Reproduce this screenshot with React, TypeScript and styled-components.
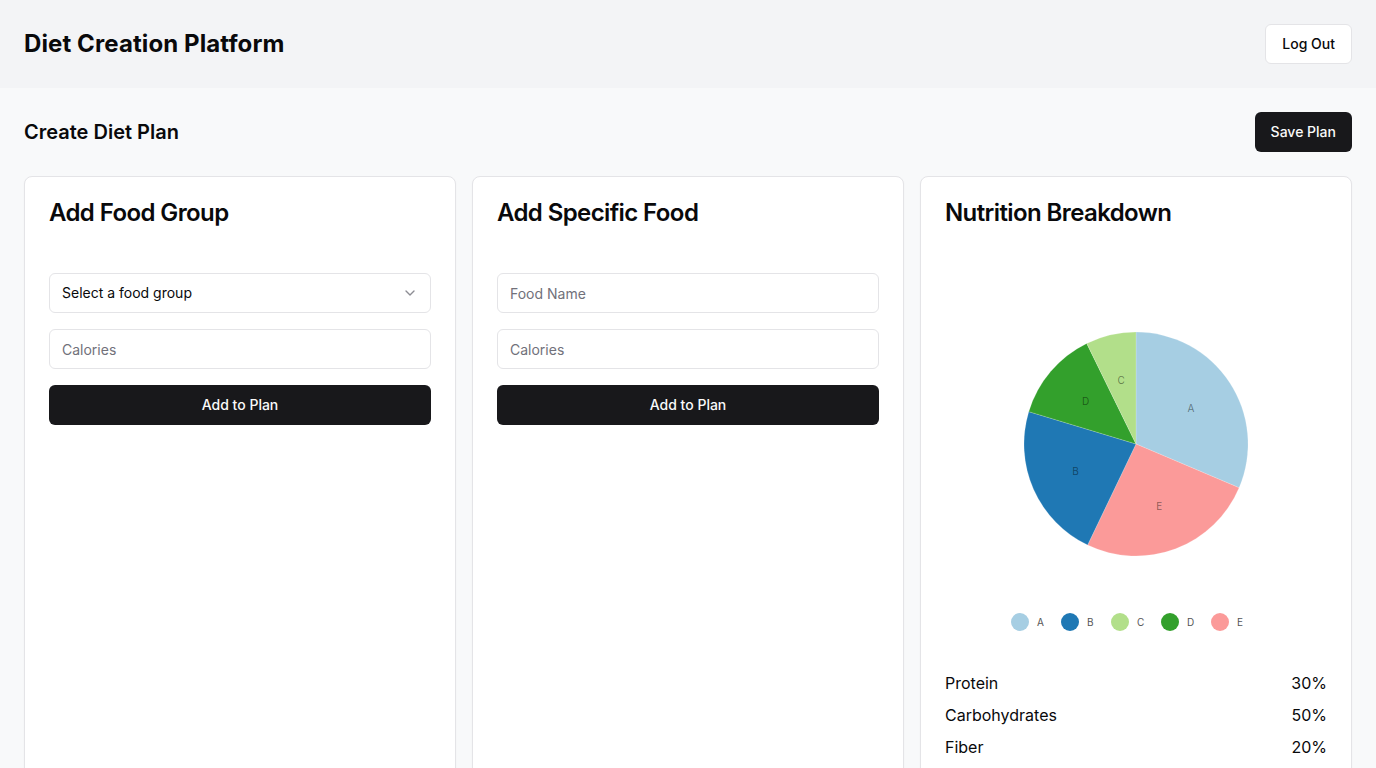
import styled, { createGlobalStyle } from "styled-components";

const GlobalStyle = createGlobalStyle`
  * {
    box-sizing: border-box;
  }
  body {
    margin: 0;
    font-family: Inter, "Noto Sans", sans-serif;
    color: #09090b;
    background: #f8f9fa;
  }
`;

interface Slice {
  label: string;
  color: string;
  start: number;
  end: number;
}

// angles measured clockwise from 12 o'clock, in degrees
const slices: Slice[] = [
  { label: "A", color: "#a6cee3", start: 0, end: 113 },
  { label: "E", color: "#fb9a99", start: 113, end: 205.6 },
  { label: "B", color: "#1f78b4", start: 205.6, end: 286.8 },
  { label: "D", color: "#33a02c", start: 286.8, end: 333.9 },
  { label: "C", color: "#b2df8a", start: 333.9, end: 360 },
];

const legend = [
  { label: "A", color: "#a6cee3" },
  { label: "B", color: "#1f78b4" },
  { label: "C", color: "#b2df8a" },
  { label: "D", color: "#33a02c" },
  { label: "E", color: "#fb9a99" },
];

const nutrients = [
  { name: "Protein", value: "30%" },
  { name: "Carbohydrates", value: "50%" },
  { name: "Fiber", value: "20%" },
];

const CX = 191;
const CY = 171;
const R = 112;

const point = (deg: number, r: number) => {
  const rad = (deg * Math.PI) / 180;
  return [CX + Math.sin(rad) * r, CY - Math.cos(rad) * r];
};

const arcPath = (s: Slice) => {
  const [x1, y1] = point(s.start, R);
  const [x2, y2] = point(s.end, R);
  const large = s.end - s.start > 180 ? 1 : 0;
  return `M ${CX} ${CY} L ${x1} ${y1} A ${R} ${R} 0 ${large} 1 ${x2} ${y2} Z`;
};

const PieChart = () => (
  <ChartSvg width={382} height={376} viewBox="0 0 382 376">
    {slices.map((s) => (
      <path key={s.label} d={arcPath(s)} fill={s.color} stroke="#fff" strokeWidth={0.3} strokeOpacity={0.6} />
    ))}
    {slices.map((s) => {
      const [x, y] = point((s.start + s.end) / 2, 66);
      return (
        <text
          key={s.label}
          x={x}
          y={y}
          textAnchor="middle"
          dominantBaseline="central"
          fontSize={10}
          fill="#000"
          fillOpacity={0.45}
        >
          {s.label}
        </text>
      );
    })}
    {legend.map((l, i) => (
      <g key={l.label}>
        <circle cx={75 + i * 50} cy={349} r={9} fill={l.color} />
        <text x={92 + i * 50} y={349} dominantBaseline="central" fontSize={10} fill="#555">
          {l.label}
        </text>
      </g>
    ))}
  </ChartSvg>
);

const App = () => {
  return (
    <>
      <GlobalStyle />
      <Header>
        <AppTitle>Diet Creation Platform</AppTitle>
        <OutlineButton>Log Out</OutlineButton>
      </Header>
      <Main>
        <TopRow>
          <PageTitle>Create Diet Plan</PageTitle>
          <DarkButton>Save Plan</DarkButton>
        </TopRow>
        <Grid>
          <Card>
            <CardHeader>
              <CardTitle>Add Food Group</CardTitle>
            </CardHeader>
            <CardContent>
              <SelectBox>
                <span>Select a food group</span>
                <svg width="16" height="16" viewBox="0 0 24 24" fill="none" stroke="#71717a" strokeWidth="2" strokeLinecap="round" strokeLinejoin="round" opacity="0.8">
                  <path d="m6 9 6 6 6-6" />
                </svg>
              </SelectBox>
              <Input placeholder="Calories" />
              <DarkButton $full>Add to Plan</DarkButton>
            </CardContent>
          </Card>
          <Card>
            <CardHeader>
              <CardTitle>Add Specific Food</CardTitle>
            </CardHeader>
            <CardContent>
              <Input placeholder="Food Name" />
              <Input placeholder="Calories" />
              <DarkButton $full>Add to Plan</DarkButton>
            </CardContent>
          </Card>
          <Card>
            <CardHeader>
              <CardTitle>Nutrition Breakdown</CardTitle>
            </CardHeader>
            <CardContent>
              <PieChart />
              <NutrientList>
                {nutrients.map((n) => (
                  <NutrientRow key={n.name}>
                    <span>{n.name}</span>
                    <span>{n.value}</span>
                  </NutrientRow>
                ))}
              </NutrientList>
            </CardContent>
          </Card>
        </Grid>
      </Main>
    </>
  );
};

const Header = styled.header`
  height: 88px;
  padding: 0 24px;
  background: #f3f4f6;
  display: flex;
  align-items: center;
  justify-content: space-between;
`;

const AppTitle = styled.h1`
  margin: 0;
  font-size: 24px;
  font-weight: 700;
  line-height: 32px;
  letter-spacing: 0.1px;
`;

const OutlineButton = styled.button`
  height: 40px;
  padding: 0 16px 1px;
  background: #fff;
  border: 1px solid #e4e4e7;
  border-radius: 6px;
  font-family: inherit;
  font-size: 14px;
  font-weight: 500;
  color: #09090b;
`;

const DarkButton = styled.button<{ $full?: boolean }>`
  height: 40px;
  padding: 0 16px 1px;
  width: ${(p) => (p.$full ? "100%" : "auto")};
  background: #18181b;
  border: none;
  border-radius: 6px;
  font-family: inherit;
  font-size: 14px;
  font-weight: 500;
  color: #fafafa;
`;

const Main = styled.main`
  padding: 24px;
`;

const TopRow = styled.div`
  display: flex;
  align-items: center;
  justify-content: space-between;
  margin-bottom: 24px;
`;

const PageTitle = styled.h2`
  margin: 0;
  font-size: 20px;
  font-weight: 600;
`;

const Grid = styled.div`
  display: grid;
  grid-template-columns: repeat(3, 1fr);
  gap: 16px;
`;

const Card = styled.div`
  background: #fff;
  border: 1px solid #e4e4e7;
  border-radius: 8px;
  box-shadow: 0 1px 2px rgba(0, 0, 0, 0.04);
`;

const CardHeader = styled.div`
  padding: 24px;
`;

const CardTitle = styled.h3`
  margin: 0;
  font-size: 24px;
  font-weight: 600;
  line-height: 24px;
  letter-spacing: -0.6px;
`;

const CardContent = styled.div`
  padding: 24px;
  padding-top: 0;
  margin-top: 24px;
  display: flex;
  flex-direction: column;
  gap: 16px;
`;

const SelectBox = styled.div`
  height: 40px;
  padding: 0 12px 1px;
  border: 1px solid #e4e4e7;
  border-radius: 6px;
  display: flex;
  align-items: center;
  justify-content: space-between;
  font-size: 14px;
`;

const Input = styled.input`
  height: 40px;
  padding: 0 12px;
  border: 1px solid #e4e4e7;
  border-radius: 6px;
  font-family: inherit;
  font-size: 14px;
  color: #09090b;
  outline: none;
  &::placeholder {
    color: #71717a;
  }
`;

const ChartSvg = styled.svg`
  display: block;
  font-family: Inter, sans-serif;
`;

const NutrientList = styled.div`
  margin-top: 6px;
  display: flex;
  flex-direction: column;
  gap: 8px;
`;

const NutrientRow = styled.div`
  display: flex;
  justify-content: space-between;
  font-size: 16px;
  line-height: 24px;
`;

export default App;
